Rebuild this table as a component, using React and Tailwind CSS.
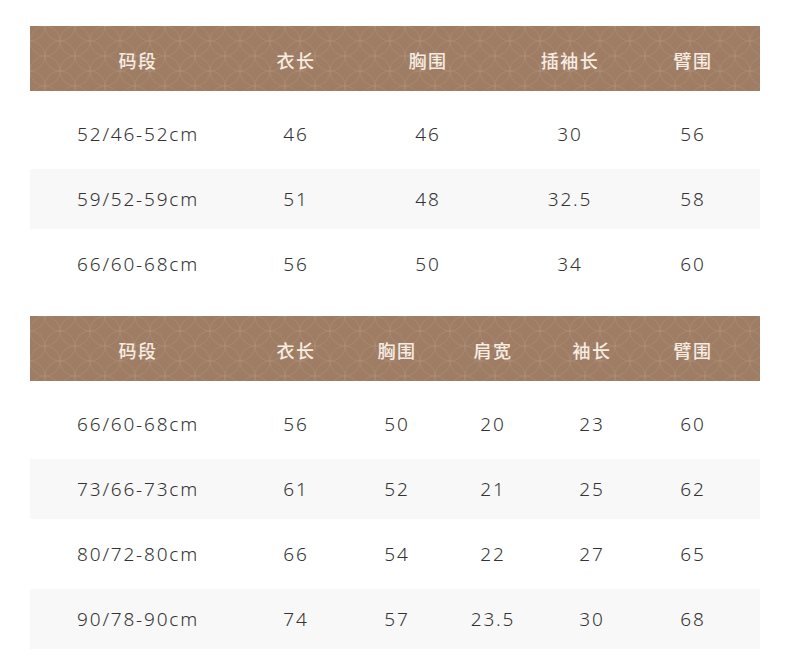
import React from "react";

const table1 = {
  cols: "grid-cols-[216px_100px_164px_120px_126px]",
  head: ["码段", "衣长", "胸围", "插袖长", "臂围"],
  rows: [
    ["52/46-52cm", "46", "46", "30", "56"],
    ["59/52-59cm", "51", "48", "32.5", "58"],
    ["66/60-68cm", "56", "50", "34", "60"],
  ],
};

const table2 = {
  cols: "grid-cols-[216px_100px_102px_90px_108px_94px]",
  head: ["码段", "衣长", "胸围", "肩宽", "袖长", "臂围"],
  rows: [
    ["66/60-68cm", "56", "50", "20", "23", "60"],
    ["73/66-73cm", "61", "52", "21", "25", "62"],
    ["80/72-80cm", "66", "54", "22", "27", "65"],
    ["90/78-90cm", "74", "57", "23.5", "30", "68"],
  ],
};

// faint lattice of rings on the header band
const Lattice = ({ id }) => (
  <svg className="absolute inset-0 w-full h-full" aria-hidden="true">
    <defs>
      <pattern id={id} width="30" height="30" patternUnits="userSpaceOnUse">
        <circle cx="15" cy="15" r="15" fill="none" stroke="rgba(255,240,225,0.08)" strokeWidth="1" />
        <circle cx="0" cy="0" r="15" fill="none" stroke="rgba(255,240,225,0.08)" strokeWidth="1" />
        <circle cx="30" cy="0" r="15" fill="none" stroke="rgba(255,240,225,0.08)" strokeWidth="1" />
        <circle cx="0" cy="30" r="15" fill="none" stroke="rgba(255,240,225,0.08)" strokeWidth="1" />
        <circle cx="30" cy="30" r="15" fill="none" stroke="rgba(255,240,225,0.08)" strokeWidth="1" />
      </pattern>
    </defs>
    <rect width="100%" height="100%" fill={`url(#${id})`} />
  </svg>
);

const SizeTable = ({ data, id }) => (
  <div>
    <div className="relative h-[65px] bg-[#9f7d64] overflow-hidden">
      <Lattice id={id} />
      <div className={`relative grid ${data.cols} h-full items-center pt-[4px]`}>
        {data.head.map((h, i) => (
          <div
            key={i}
            className="text-center text-[18px] font-medium tracking-[1.5px] text-[#f6ece2] font-['Noto_Sans_CJK_SC',sans-serif]"
          >
            {h}
          </div>
        ))}
      </div>
    </div>
    <div className="flex flex-col gap-[5px] pt-[13px]">
      {data.rows.map((row, r) => (
        <div
          key={r}
          className={`grid ${data.cols} h-[60px] items-center ${r % 2 === 1 ? "bg-[#f8f8f8]" : "bg-white"}`}
        >
          {row.map((cell, c) => (
            <div
              key={c}
              className="text-center text-[19px] font-light tracking-[1.8px] text-[#333333] font-['Noto_Sans',sans-serif]"
            >
              {cell}
            </div>
          ))}
        </div>
      ))}
    </div>
  </div>
);

export default function App() {
  return (
    <div className="w-[790px] h-[670px] bg-white pt-[26px] px-[30px]">
      <div className="flex flex-col gap-[22px]">
        <SizeTable data={table1} id="lat1" />
        <SizeTable data={table2} id="lat2" />
      </div>
    </div>
  );
}
